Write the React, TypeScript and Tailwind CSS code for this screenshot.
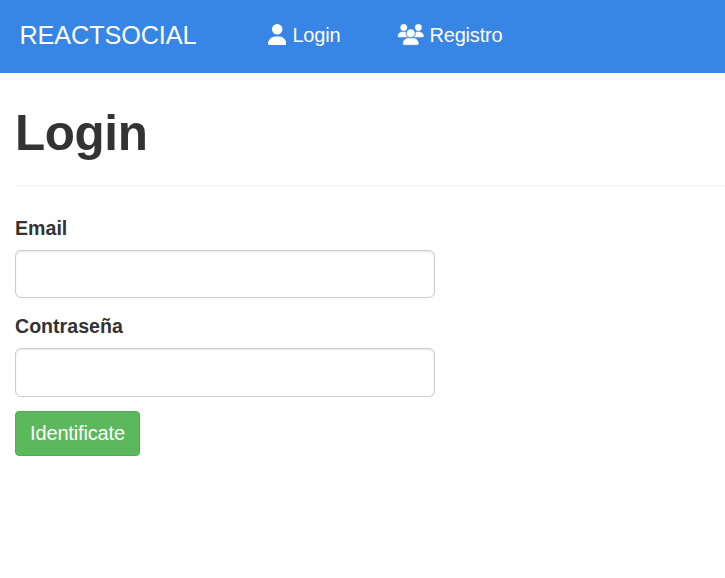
import { FaUser, FaUsers } from "react-icons/fa6";

function Field({ label, type, inputClass }: { label: string; type: string; inputClass: string }) {
  return (
    <label className="block">
      <span className="block h-[34px] text-[19.6px] leading-6 font-bold">{label}</span>
      <input
        type={type}
        className={`block w-[420px] rounded-[6px] border border-[#ccc] bg-white px-4 shadow-[inset_0_1px_2px_rgba(0,0,0,0.1)] ${inputClass}`}
      />
    </label>
  );
}

export default function App() {
  return (
    <div className="h-[578px] overflow-hidden bg-white font-['Liberation_Sans',Arial,sans-serif] text-[#333]">
      <header className="flex h-[73px] items-start bg-[#3785e5] text-white">
        <div className="w-[268px] pt-[17px] pl-[19.5px] text-[25.2px] leading-9 tracking-[-0.08px]">REACTSOCIAL</div>
        <nav className="flex pt-[23px] text-[20px] leading-6 tracking-[-0.2px]">
          <a className="flex w-[130px] items-center gap-[6px]">
            <FaUser className="mb-[1px] h-[21px] w-[18.4px]" />
            <span>Login</span>
          </a>
          <a className="flex items-center gap-[6px]">
            <FaUsers className="mb-[1px] h-[21px] w-[25.5px] overflow-visible stroke-white stroke-[12]" />
            <span>Registro</span>
          </a>
        </nav>
      </header>
      <main className="pl-[15px]">
        <h1 className="h-[113px] border-b border-[#eee] pt-[32px] text-[49.4px] leading-[56px] font-bold tracking-[-0.4px]">
          Login
        </h1>
        <form className="flex flex-col items-start pt-[30px]">
          <Field label="Email" type="email" inputClass="mb-4 h-12" />
          <Field label="Contraseña" type="password" inputClass="h-[49px]" />
          <button
            type="button"
            className="mt-[14px] h-[45px] w-[125px] rounded-[4px] border border-[#4cae4c] bg-[#5cb85c] pb-[2px] text-[20px] tracking-[-0.15px] text-white"
          >
            Identificate
          </button>
        </form>
      </main>
    </div>
  );
}
